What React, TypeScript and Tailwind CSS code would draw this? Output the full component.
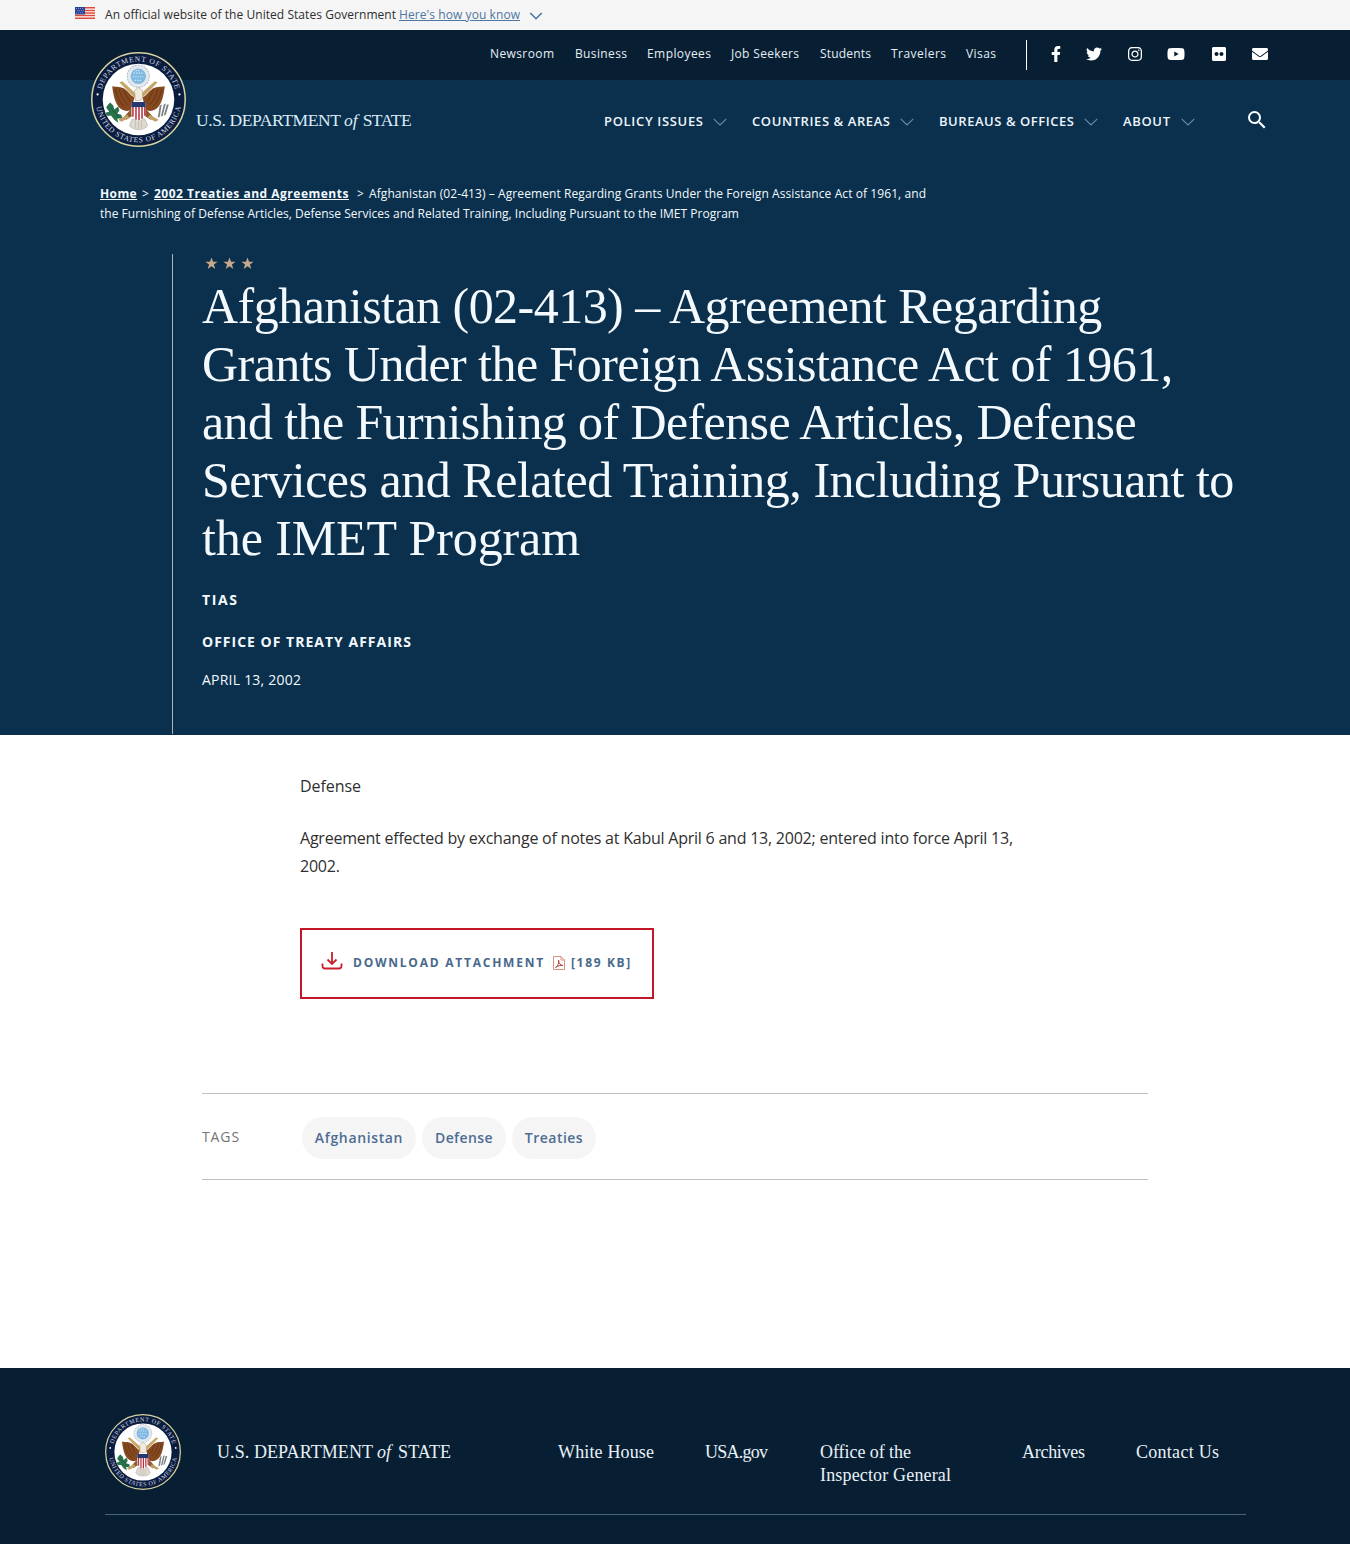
import { FaFacebookF, FaTwitter, FaInstagram, FaYoutube, FaFlickr, FaEnvelope } from "react-icons/fa";
import { MdSearch } from "react-icons/md";

function Seal({ id, className }: { id: string; className: string }) {
  return (
    <svg viewBox="0 0 94 94" className={className} role="img" aria-label="Department of State seal">
      <defs>
        <path id={`${id}-top`} d="M9.3 47 A37.7 37.7 0 0 1 84.7 47" />
        <path id={`${id}-bottom`} d="M4.6 47 A42.4 42.4 0 0 0 89.4 47" />
      </defs>
      <circle cx="47" cy="47" r="46.2" fill="#0b1d3f" stroke="#d8d3a0" strokeWidth="1.5" />
      <circle cx="47" cy="47" r="35.4" fill="#fff" />
      <g fill="#d3d8e6" fontFamily="Liberation Serif, serif" fontSize="7.5">
        <text textLength="98" textAnchor="middle">
          <textPath href={`#${id}-top`} startOffset="50%">DEPARTMENT OF STATE</textPath>
        </text>
        <text textLength="118" textAnchor="middle">
          <textPath href={`#${id}-bottom`} startOffset="50%">UNITED STATES OF AMERICA</textPath>
        </text>
      </g>
      <circle cx="6.500" cy="42" r="1.1" fill="#fff" />
      <circle cx="87.500" cy="42" r="1.1" fill="#fff" />
      <circle cx="46.8" cy="24" r="11" fill="#e4e9ee" stroke="#b3bcc5" strokeWidth="1" strokeDasharray="2 1" />
      <circle cx="46.8" cy="24" r="7.600" fill="#7fb9e2" />
      <path d="M42 21h9M41 24.500h11M43 28h7M44 18.500h5" stroke="#c9e4f5" strokeWidth="1.200" strokeDasharray="1.500 1" />
      <path d="M21 34c1 9 3 18 8 22 4 3 8 3 11 1l3-12c-4-2-6-6-9-8-4-3-9-2-13-3zM73 34c-1 9-3 18-8 22-4 3-8 3-11 1l-3-12c4-2 6-6 9-8 4-3 9-2 13-3z" fill="#85481f" />
      <path d="M24 37c2 7 4 13 9 17M28 37c1 6 4 11 8 15M33 38c1 4 3 8 6 11M70 37c-2 7-4 13-9 17M66 37c-1 6-4 11-8 15M61 38c-1 4-3 8-6 11" fill="none" stroke="#5c3012" strokeWidth=".8" />
      <path d="M28 30l3-1 9 8 5 5-2 3-7-7zM66 30l-3-1-9 8-5 5 2 3 7-7z" fill="#c8a566" />
      <path d="M43 38l4-3 4 3v7l-2 3h-5z" fill="#f1ece0" stroke="#a2917a" strokeWidth=".5" />
      <path d="M40 56l-8 9 3 2 9-6zM54 56l8 9-3 2-9-6z" fill="#8d5a2c" />
      <path d="M27 67l9-5 2 3-8 4zM67 67l-9-5-2 3 8 4z" fill="#c2a066" />
      <path d="M40 68c0-4 14-4 14 0l2 5c-4 5-14 5-18 0z" fill="#dedad2" stroke="#aaa69c" strokeWidth=".6" />
      <path d="M44 67v8M47 66v10M50 67v8" stroke="#b5afa5" strokeWidth=".6" />
      <path d="M40 50h14v11c0 4-4 6-7 7-3-1-7-3-7-7z" fill="#fff" />
      <path d="M41.500 54v10M44.500 54v13M47.500 54v13.500M50.500 54v12M53.300 54v9" stroke="#b53140" strokeWidth="1.500" />
      <path d="M40 49.500h14v5h-14z" fill="#25386f" />
      <path d="M17 52l2-2 3 3 1 4 4-3 1 4-2 3 4 1 1 3-5 1 1 4-4-3-3-4-4 0-2-3 4-1-3-4z" fill="#26724a" />
      <path d="M20 56l9 10" stroke="#154d31" strokeWidth=".7" />
      <path d="M66 65l2-12 2-1-2 12zM69 64l3-12 2-1-3 12zM72 63l3-11 2 0-3 10z" fill="#7d8185" />
    </svg>
  );
}

function Chevron() {
  return (
    <svg viewBox="0 0 14 8" className="h-2 w-3.5" fill="none" stroke="#6d8ba5" strokeWidth="1.1">
      <path d="M.7.8 7 7 13.300.8" />
    </svg>
  );
}

function Star() {
  return (
    <svg viewBox="0 0 24 24" className="size-[13px]" fill="#c7a98a">
      <path d="M12 .8l2.900 8h8.300l-6.700 5 2.500 8.200-7-5-7 5 2.500-8.200L.8 8.800h8.300z" />
    </svg>
  );
}

const topLinks = [
  { label: "Newsroom", style: "w-[85px] tracking-[0.393px]" },
  { label: "Business", style: "w-[72px] tracking-[0.371px]" },
  { label: "Employees", style: "w-[84px] tracking-[0.428px]" },
  { label: "Job Seekers", style: "w-[89px] tracking-[0.338px]" },
  { label: "Students", style: "w-[71px] tracking-[0.192px]" },
  { label: "Travelers", style: "w-[75px] tracking-[0.461px]" },
  { label: "Visas", style: "w-[60px] tracking-[0.426px]" },
];

const mainLinks = [
  { label: "POLICY ISSUES", style: "w-[148px] tracking-[0.676px]" },
  { label: "COUNTRIES & AREAS", style: "w-[187px] tracking-[0.588px]" },
  { label: "BUREAUS & OFFICES", style: "w-[184px] tracking-[0.547px]" },
  { label: "ABOUT", style: "w-[97px] tracking-[0.648px]" },
];

const titleLines = [
  { text: "Afghanistan (02-413) – Agreement Regarding", style: "tracking-[-0.53px]" },
  { text: "Grants Under the Foreign Assistance Act of 1961,", style: "tracking-[-0.55px]" },
  { text: "and the Furnishing of Defense Articles, Defense", style: "tracking-[-0.6px]" },
  { text: "Services and Related Training, Including Pursuant to", style: "tracking-[-0.48px]" },
  { text: "the IMET Program", style: "tracking-[-0.1px]" },
];

const tags = [
  { label: "Afghanistan", style: "w-[114px] tracking-[0.64px]" },
  { label: "Defense", style: "w-[84px] tracking-[0.4px]" },
  { label: "Treaties", style: "w-[84px] tracking-[0.48px]" },
];

export default function App() {
  return (
    <div className="h-[1544px] overflow-hidden bg-white font-['Open_Sans',sans-serif]">
      <div className="flex h-[30px] items-center whitespace-nowrap bg-[#f5f5f5] pl-[75px] text-[12px] text-[#2e2e2e]">
        <svg viewBox="0 0 20 12" className="mb-1 h-3 w-5">
          <path d="M0 0h20v12H0z" fill="#fff" />
          <path d="M0 .8h20M0 3.400h20M0 6h20M0 8.600h20M0 11.200h20" stroke="#db4a3c" strokeWidth="1.500" />
          <path d="M0 0h10v7.500H0z" fill="#2b4396" />
          <path d="M1 1.500h8M2 3.700h7M1 5.900h8" stroke="#96a4d4" strokeWidth=".8" strokeDasharray="1 1" />
        </svg>
        <span className="ml-2.5 w-[294px] tracking-[0.05px]">An official website of the United States Government</span>
        <a className="tracking-[0.079px] text-[#4d76a0] underline">Here's how you know</a>
        <svg viewBox="0 0 14 8" className="ml-[9px] mt-0.5 h-2 w-3.5" fill="none" stroke="#4a76a3" strokeWidth="1.600">
          <path d="M1.300 1 7 6.700 12.700 1" />
        </svg>
      </div>

      <header className="bg-[#0a304d]">
        <div className="flex h-[50px] items-center bg-[#081f33] pl-[490px] text-[12px] text-[#e6eef5]">
          <nav className="mb-0.5 flex w-[536px] whitespace-nowrap">
            {topLinks.map((link) => (
              <a key={link.label} className={link.style}>{link.label}</a>
            ))}
          </nav>
          <div className="h-[30px] w-px bg-white" />
          <div className="mb-0.5 ml-[20px] flex items-center text-[16px] text-white">
            <span className="w-[39px]"><FaFacebookF className="ml-px" /></span>
            <span className="w-[41px]"><FaTwitter /></span>
            <span className="w-[40px]"><FaInstagram /></span>
            <span className="w-[44px] text-[18px]"><FaYoutube /></span>
            <span className="w-[41px]"><FaFlickr /></span>
            <FaEnvelope />
          </div>
        </div>
        <div className="flex h-[100px]">
          <Seal id="header-seal" className="relative -mt-7 ml-[91px] size-[95px] shrink-0" />
          <div className="ml-[10px] mt-[30px] flex h-5 w-[408px] items-baseline whitespace-nowrap font-['Liberation_Serif',serif] text-[17.5px] leading-5 text-[#dcebf7]">
            <span className="w-[148px] tracking-[-0.392px]">U.S. DEPARTMENT</span>
            <span className="italic">of</span>
            <span className="ml-[5px] tracking-[-0.5px]">STATE</span>
          </div>
          <nav className="mt-[32px] flex h-5 items-center whitespace-nowrap text-[13px] font-semibold text-[#eef5fb]">
            {mainLinks.map((link) => (
              <a key={link.label} className={`flex items-center justify-between pr-[25px] ${link.style}`}>
                {link.label}
                <Chevron />
              </a>
            ))}
          </nav>
          <MdSearch className="ml-[25px] mt-[28px] size-6 text-white" />
        </div>
      </header>

      <section className="h-[555px] bg-[#0a304d] text-[#f4f9fd]">
        <div className="ml-[100px] whitespace-nowrap pt-1 text-[12px] leading-5">
          <div className="flex">
            <a className="mr-[5px] w-[37px] font-bold tracking-[0.4px] underline">Home</a>
            <span className="w-[12px]">&gt;</span>
            <a className="mr-2 w-[195px] font-bold tracking-[0.505px] underline">2002 Treaties and Agreements</a>
            <span className="w-[12px]">&gt;</span>
            <span className="tracking-[0.083px]">Afghanistan (02-413) – Agreement Regarding Grants Under the Foreign Assistance Act of 1961, and</span>
          </div>
          <div className="tracking-[0.019px]">
            the Furnishing of Defense Articles, Defense Services and Related Training, Including Pursuant to the IMET Program
          </div>
        </div>
        <div className="ml-[172px] mt-[30px] h-[480px] border-l border-[#aeb3ad] pl-[29px]">
          <div className="flex gap-[5px] pl-[3px] pt-[3px]"><Star /><Star /><Star /></div>
          <h1 className="mt-[7px] flex flex-col whitespace-nowrap font-['Liberation_Serif',serif] text-[50px] leading-[58px]">
            {titleLines.map((line) => (
              <span key={line.text} className={line.style}>{line.text}</span>
            ))}
          </h1>
          <p className="mt-[23px] text-[14px] font-bold leading-5 tracking-[1.6px]">TIAS</p>
          <p className="mt-[22px] text-[14px] font-bold leading-5 tracking-[1.01px]">OFFICE OF TREATY AFFAIRS</p>
          <p className="mt-[18px] text-[14px] leading-5 tracking-[0.226px]">APRIL 13, 2002</p>
        </div>
      </section>

      <main className="h-[633px] text-[#2f2f2f]">
        <div className="ml-[300px] w-[725px] pt-[37px] text-[16px] leading-7">
          <p className="tracking-[-0.065px]">Defense</p>
          <p className="mt-6 tracking-[-0.228px]">
            Agreement effected by exchange of notes at Kabul April 6 and 13, 2002; entered into force April 13, 2002.
          </p>
          <a className="mt-12 flex h-[71px] w-[354px] items-center whitespace-nowrap border-2 border-[#c21728] pb-0.5 pl-[19px] text-[12px] font-bold text-[#48698c]">
            <svg viewBox="0 0 22 20" className="mb-1 h-5 w-[22px]" fill="none" stroke="#c5232c" strokeWidth="1.800">
              <path d="M11 1v11.500M6.500 8.500l4.500 4.500 4.500-4.500M1.500 12.500v2.500q0 2.500 2.500 2.500h14q2.500 0 2.500-2.500v-2.500" />
            </svg>
            <span className="ml-[10px] w-[200px] tracking-[1.76px]">DOWNLOAD ATTACHMENT</span>
            <svg viewBox="0 0 12 14" className="mr-[6px] h-3.5 w-3" fill="none" stroke="#dd8f7c" strokeWidth="1">
              <path d="M.5.5h7.500l3.500 3.500v9.500h-11zM8 .5v3.500h3.500" />
              <path d="M2.500 11.500c3-2 3.500-5 3-7.500 0 3 2 5.500 4.500 5.500-3-.5-5 .5-7.500 2z" stroke="#b5453f" />
            </svg>
            <span className="tracking-[1.65px]">[189 KB]</span>
          </a>
        </div>
        <div className="ml-[202px] mt-[94px] flex h-[87px] w-[946px] items-center border-y border-[#bdbfc1] text-[14px]">
          <span className="w-[100px] font-medium tracking-[0.9px] text-[#757575]">TAGS</span>
          <div className="mt-0.5 flex gap-1.5 font-semibold text-[#4d6d94]">
            {tags.map((tag) => (
              <span key={tag.label} className={`flex h-[42px] items-center justify-center rounded-full bg-[#f5f5f5] ${tag.style}`}>
                {tag.label}
              </span>
            ))}
          </div>
        </div>
      </main>

      <footer className="h-[176px] whitespace-nowrap bg-[#081f33] pl-[105px] pt-[46px] font-['Liberation_Serif',serif] text-[18px] leading-[23px] text-[#e9f1f8]">
        <div className="flex h-[101px] w-[1141px] border-b border-[#4a6278]">
          <Seal id="footer-seal" className="size-[76px] shrink-0" />
          <div className="ml-9 mt-[27px] flex w-[341px] items-baseline">
            <span className="w-[160px] tracking-[0.087px]">U.S. DEPARTMENT</span>
            <span className="italic">of</span>
            <span className="ml-[7px] tracking-[0.109px]">STATE</span>
          </div>
          <nav className="mt-[27px] flex">
            <a className="w-[147px] tracking-[0.152px]">White House</a>
            <a className="w-[115px] tracking-[-0.753px]">USA.gov</a>
            <a className="flex w-[202px] flex-col">
              <span className="tracking-[-0.053px]">Office of the</span>
              <span className="tracking-[0.16px]">Inspector General</span>
            </a>
            <a className="w-[114px] tracking-[-0.283px]">Archives</a>
            <a className="tracking-[0.278px]">Contact Us</a>
          </nav>
        </div>
      </footer>
    </div>
  );
}
